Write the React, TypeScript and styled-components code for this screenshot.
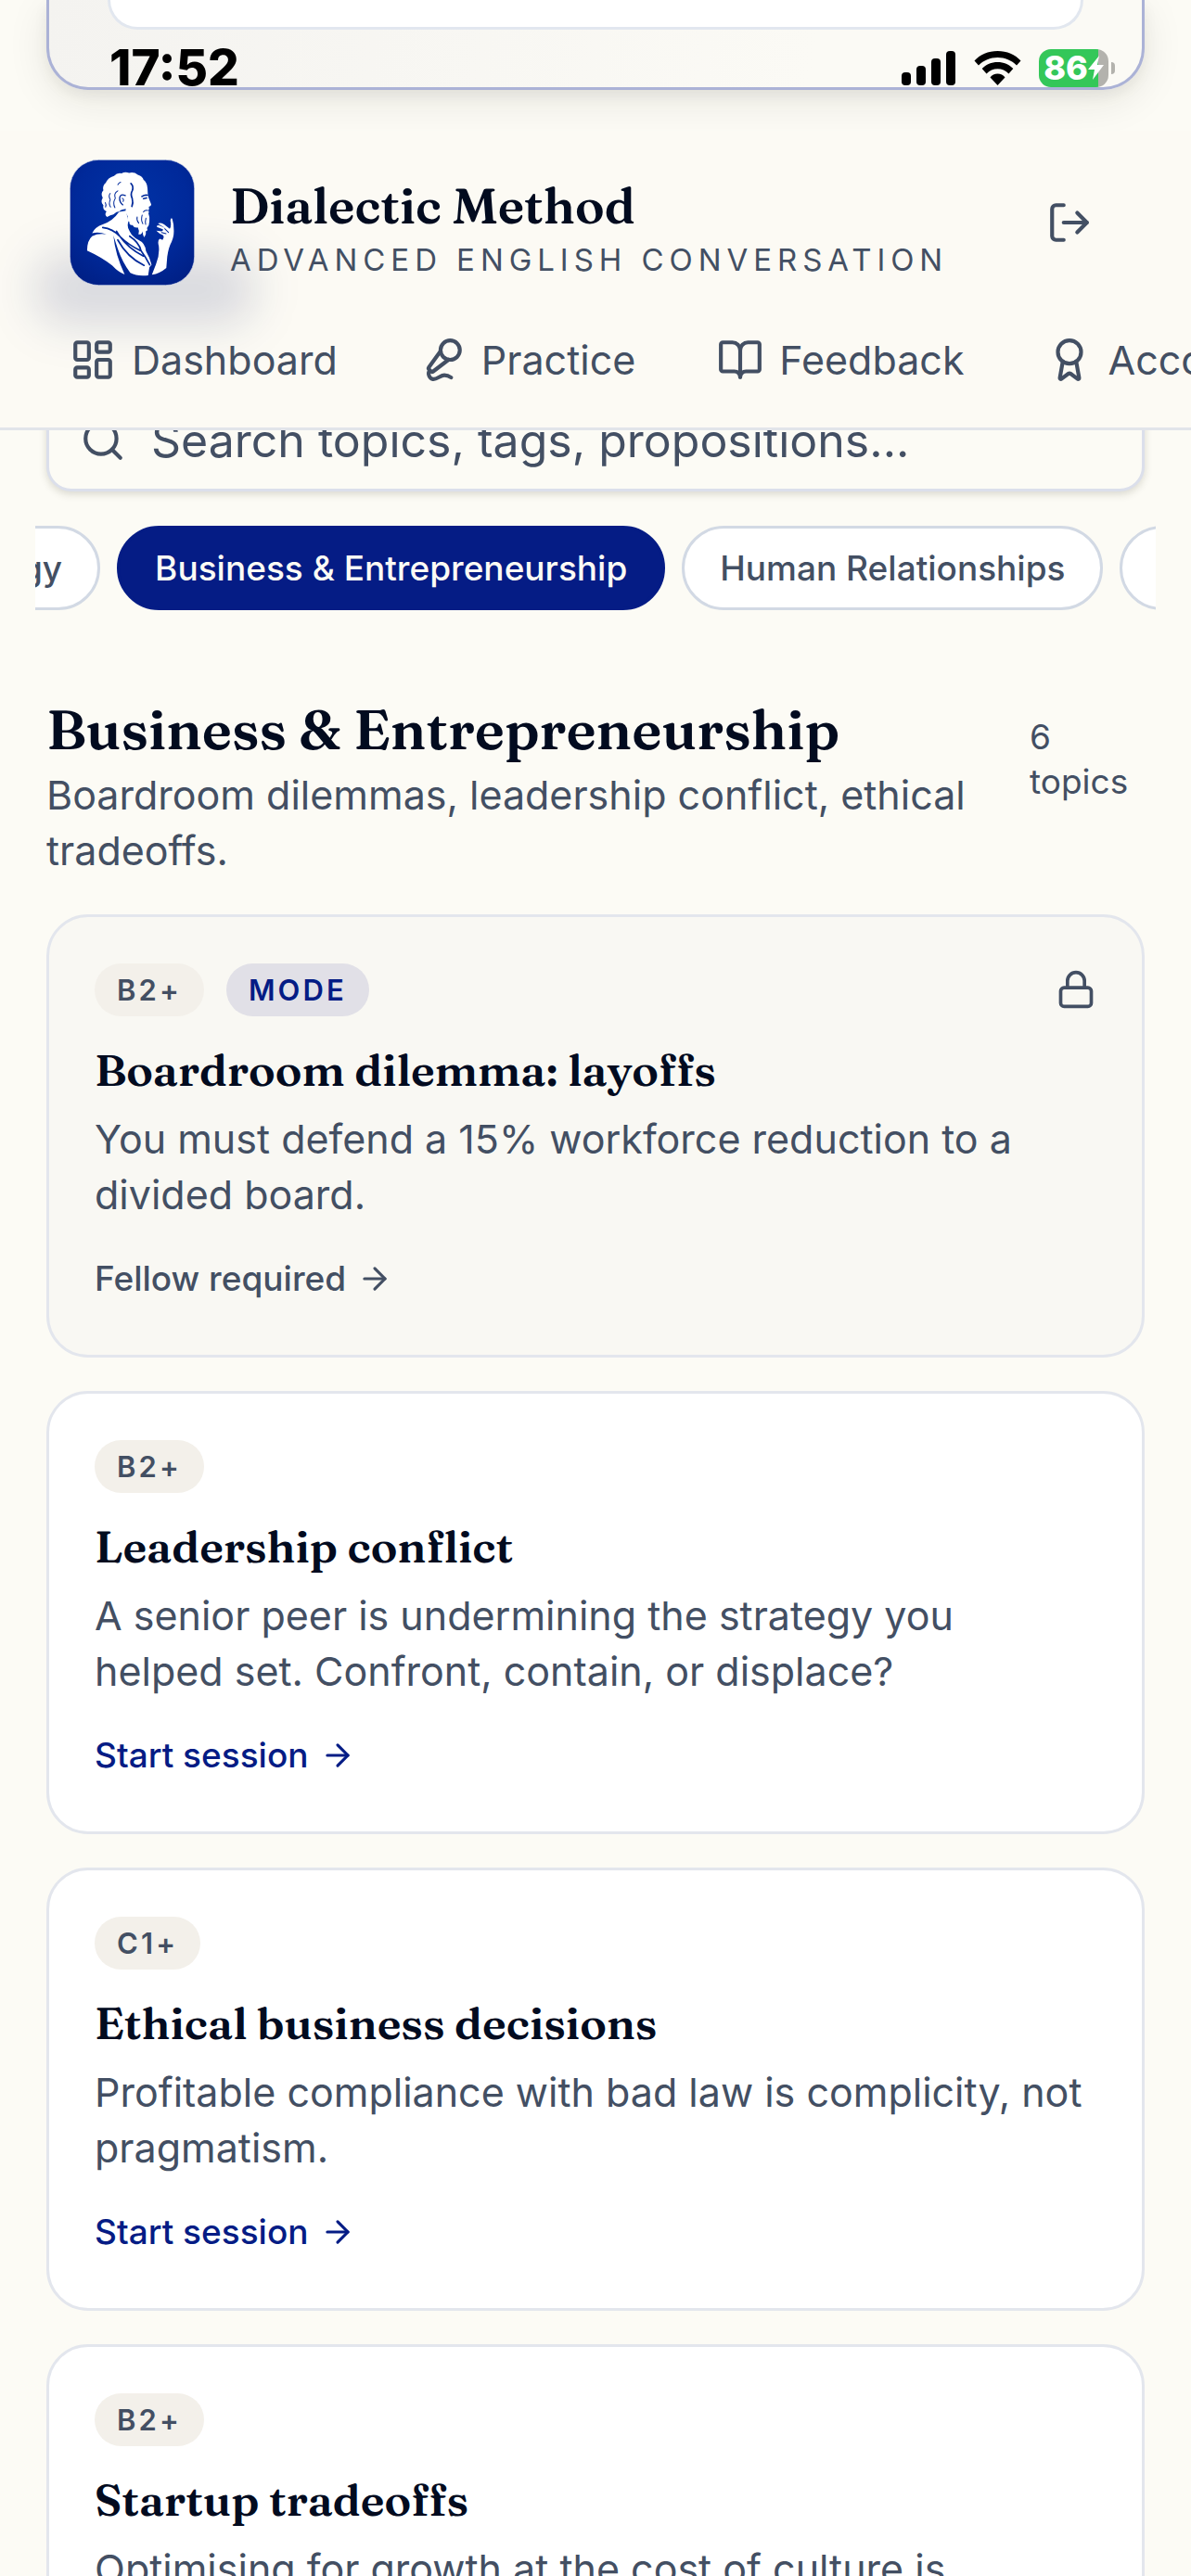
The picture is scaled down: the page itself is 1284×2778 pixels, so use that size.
import React, { useLayoutEffect, useRef, useState } from 'react';
import styled, { createGlobalStyle } from 'styled-components';
import {
  ArrowRight,
  Award,
  BookOpen,
  LayoutDashboard,
  Lock,
  LogOut,
  MicVocal,
  Search,
} from 'lucide-react';

const sans = `Inter, "Liberation Sans", sans-serif`;
const serif = `Fraunces, "Liberation Serif", serif`;

const color = {
  paper: '#fcfbf5',
  ink: '#020b1f',
  slate: '#434f63',
  navy: '#051c85',
  line: '#e3e6ed',
  chipLine: '#d2d9e4',
};

const GlobalStyle = createGlobalStyle`
  *, *::before, *::after { box-sizing: border-box; }
  html, body { margin: 0; height: 100%; overflow: hidden; background: ${color.paper}; }
  #root { height: 100%; }
  body { font-family: ${sans}; color: ${color.slate}; }
  h1, h2, h3, p { margin: 0; }
`;

const Page = styled.div`
  position: relative;
  height: 100%;
  overflow: hidden;
  background: ${color.paper};
`;

const StatusBar = styled.div`
  position: absolute;
  inset: 0 0 auto 0;
  z-index: 5;
  display: flex;
  justify-content: space-between;
  align-items: center;
  height: 146px;
  padding: 0 82px 0 118px;
`;

const Clock = styled.time`
  font-size: 53px;
  font-weight: 800;
  line-height: 60px;
  color: #000;
`;

const StatusIcons = styled.div`
  display: flex;
  align-items: center;
  gap: 19px;
`;

const Battery = styled.div`
  display: flex;
  align-items: center;
  gap: 3px;
`;

const BatteryBody = styled.div`
  display: flex;
  align-items: center;
  justify-content: center;
  width: 75px;
  height: 41px;
  border-radius: 13px;
  background: linear-gradient(90deg, #34c759 86%, #b3b2ad 86%);
  color: #fff;
  font-size: 36px;
  font-weight: 800;
  line-height: 41px;
`;

const BatteryCap = styled.div`
  width: 4px;
  height: 13px;
  border-radius: 0 6px 6px 0;
  background: #b3b2ad;
`;

const Header = styled.header`
  position: absolute;
  inset: 141px 0 auto 0;
  z-index: 4;
  overflow: hidden;
  padding: 31px 0 19px;
  border-bottom: 3px solid #e2e4ea;
  background: #fcfaf4;

  &::before {
    content: '';
    position: absolute;
    left: 36px;
    top: 132px;
    width: 240px;
    height: 78px;
    border-radius: 36px;
    background: rgba(5, 28, 100, 0.14);
    filter: blur(24px);
  }
`;

const BrandRow = styled.div`
  position: relative;
  display: flex;
  align-items: center;
  justify-content: space-between;
  padding: 0 106px 0 75px;
`;

const Brand = styled.a`
  display: flex;
  align-items: center;
  gap: 38px;
  color: inherit;
  text-decoration: none;
`;

const BrandText = styled.div`
  padding-top: 14px;
`;

const LogoTile = styled.svg`
  display: block;
  width: 135px;
  height: 136px;
`;

const BrandName = styled.h1`
  font-family: ${serif};
  font-size: 53px;
  font-weight: 600;
  line-height: 66px;
  color: ${color.ink};
`;

const Tagline = styled.p`
  font-size: 33px;
  line-height: 50px;
  letter-spacing: 0.18em;
  text-transform: uppercase;
`;

const IconButton = styled.button`
  display: flex;
  padding: 0;
  border: 0;
  background: none;
  color: inherit;
`;

const Nav = styled.nav`
  position: relative;
  display: flex;
  gap: 16px;
  margin-top: 26px;
  padding: 0 39px;
  overflow: hidden;
`;

const NavLink = styled.a`
  display: flex;
  flex: none;
  align-items: center;
  gap: 17px;
  padding: 24px 36px;
  color: inherit;
  font-size: 43px;
  line-height: 60px;
  text-decoration: none;
`;

const Main = styled.main`
  padding: 0 50px;
`;

const HeroCard = styled.section`
  height: 97px;
  padding: 0 63px;
  border: 3px solid #abb2d6;
  border-top: 0;
  border-radius: 0 0 45px 45px;
  background: linear-gradient(100deg, #f4f3f0, #fbfaf5 70%);
  box-shadow: 0 12px 45px rgba(30, 30, 20, 0.09), 0 6px 15px rgba(30, 30, 20, 0.06);
`;

const HeroInner = styled.div`
  height: 32px;
  border: 3px solid #e2e7ef;
  border-top: 0;
  border-radius: 0 0 45px 45px;
  background: #fff;
`;

const SearchField = styled.label`
  display: flex;
  align-items: center;
  gap: 27px;
  height: 111px;
  margin-top: 322px;
  padding: 0 33px;
  border: 3px solid #dbdfeb;
  border-radius: 27px;
  background: ${color.paper};
  box-shadow: 0 3px 9px rgba(60, 60, 40, 0.18);
`;

const SearchInput = styled.input`
  flex: 1;
  min-width: 0;
  padding: 0;
  border: 0;
  outline: 0;
  background: none;
  color: ${color.slate};
  font-family: ${sans};
  font-size: 50px;
  line-height: 72px;

  &::placeholder {
    color: ${color.slate};
    opacity: 1;
  }
`;

const ChipStrip = styled.div`
  position: relative;
  display: flex;
  gap: 18px;
  margin: 37px -12px 0;
  overflow-x: auto;
  scrollbar-width: none;
`;

const Chip = styled.button<{ $active: boolean }>`
  flex: none;
  padding: 18px 38px;
  border: 3px solid ${({ $active }) => ($active ? color.navy : color.chipLine)};
  border-radius: 48px;
  background: ${({ $active }) => ($active ? color.navy : '#fff')};
  color: ${({ $active }) => ($active ? color.paper : color.slate)};
  font-family: ${sans};
  font-size: 37px;
  font-weight: 500;
  line-height: 49px;
`;

const SectionHead = styled.div`
  display: flex;
  align-items: baseline;
  justify-content: space-between;
  gap: 48px;
  margin-top: 88px;
`;

const SectionTitle = styled.h2`
  margin-bottom: 1px;
  font-family: ${serif};
  font-size: 60px;
  font-weight: 600;
  line-height: 80px;
  color: ${color.ink};
`;

const BodyText = styled.p`
  padding-right: 6px;
  font-size: 43px;
  line-height: 60px;
`;

const TopicCount = styled.p`
  flex: none;
  width: 124px;
  font-size: 37px;
  line-height: 48px;
`;

const CardList = styled.div`
  display: grid;
  gap: 36px;
  margin-top: 39px;
`;

const Card = styled.article<{ $locked: boolean }>`
  padding: 48px 49px;
  border: 3px solid ${color.line};
  border-radius: 45px;
  background: ${({ $locked }) => ($locked ? '#f9f8f3' : '#fff')};
`;

const BadgeRow = styled.div`
  display: flex;
  align-items: center;
  justify-content: space-between;
  height: 60px;
`;

const Badges = styled.div`
  display: flex;
  gap: 24px;
`;

const Badge = styled.span<{ $tone: 'level' | 'mode' }>`
  padding: 6px 24px;
  border-radius: 30px;
  background: ${({ $tone }) => ($tone === 'mode' ? '#e1e0e7' : '#f3f0ea')};
  color: ${({ $tone }) => ($tone === 'mode' ? color.navy : color.slate)};
  font-size: 31px;
  font-weight: 600;
  line-height: 45px;
  letter-spacing: 0.1em;
`;

const CardTitle = styled.h3`
  margin: 24px 0 11px;
  font-family: ${serif};
  font-size: 48px;
  font-weight: 600;
  line-height: 66px;
  color: ${color.ink};
`;

const CardLink = styled.a<{ $locked: boolean }>`
  display: flex;
  align-items: center;
  gap: 12px;
  margin: 37px 0 10px;
  color: ${({ $locked }) => ($locked ? color.slate : color.navy)};
  font-size: 37px;
  font-weight: 500;
  line-height: 48px;
  text-decoration: none;
`;

function PhilosopherLogo() {
  return (
    <LogoTile viewBox="46 37 400 406" preserveAspectRatio="none" role="img" aria-label="Philosopher">
      <defs>
        <radialGradient id="tile" cx="0.5" cy="0.35" r="0.75">
          <stop offset="0" stopColor="#0033a6" />
          <stop offset="0.6" stopColor="#00299a" />
          <stop offset="1" stopColor="#001f84" />
        </radialGradient>
      </defs>
      <rect x="47" y="38" width="398" height="404" rx="92" fill="url(#tile)" stroke="#dfe2f0" strokeWidth="2" />
      <g fill="#fff">
        <path d="M188 90 Q198 79 212 82 Q222 76 236 80 Q252 76 264 86 Q280 92 282 102 Q294 112 295 130 L296 148 Q298 158 299 162 L307 182 Q307 188 299 189 Q302 196 298 201 Q301 206 298 211 Q303 222 301 236 Q301 250 293 258 Q298 266 289 268 Q292 278 284 287 Q279 281 280 268 Q276 280 266 278 Q270 266 264 256 Q252 258 247 248 Q236 250 237 238 Q227 234 232 220 Q222 206 226 196 Q210 198 205 204 Q196 204 186 214 Q176 216 166 222 Q156 214 164 204 Q150 198 154 184 Q144 174 152 160 Q144 146 154 136 Q150 122 162 112 Q168 96 188 90 Z" />
        <path d="M204 206 L226 202 L234 236 Q228 254 238 268 Q246 286 266 296 Q288 306 290 332 Q302 352 308 376 L301 384 L297 410 Q262 414 240 402 Q214 366 200 324 L186 282 Q192 344 222 407 Q202 400 182 378 Q150 352 102 330 Q102 298 118 284 Q138 274 164 278 Q140 268 118 274 Q128 254 152 246 Q184 236 204 206 Z" />
        <path d="M309 408 L322 374 Q334 346 331 316 Q326 298 334 292 L343 296 Q350 286 344 280 Q332 276 323 266 L340 268 Q346 266 344 262 L325 254 Q324 246 334 250 L352 258 L328 243 Q336 239 348 246 L366 260 Q372 250 368 234 Q370 222 374 228 Q379 244 379 264 Q380 284 372 302 Q362 320 358 350 L355 386 Q334 404 309 408 Z" />
      </g>
      <g fill="none" stroke="#00299a" strokeWidth="3" strokeLinecap="round" strokeLinejoin="round">
        <path d="M242 114 Q252 124 246 138 Q240 148 246 162 Q250 176 245 188" strokeWidth="5" />
        <path d="M224 153 Q208 146 206 160 Q205 174 216 183" strokeWidth="4" />
        <path d="M214 162 Q221 164 217 172" />
        <path d="M200 118 Q204 111 209 110 M176 146 Q169 154 176 166 Q170 180 177 190" />
        <path d="M200 138 Q186 146 192 162 Q183 178 191 192 M160 176 Q164 182 161 190" />
        <path d="M277 156 Q286 150 295 152 M282 163 L292 161" strokeWidth="5" />
        <path d="M282 206 Q286 199 296 201 M278 216 Q273 232 280 244 M262 222 Q259 232 267 242 M290 226 Q287 236 289 246" />
        <path d="M152 256 Q184 260 206 284 Q234 312 272 330 M196 268 Q226 320 282 348 M200 296 Q230 352 284 378 M238 284 Q268 304 274 330 Q290 352 302 376" strokeWidth="5" />
        <path d="M340 272 L354 276 M350 260 L362 272" />
      </g>
    </LogoTile>
  );
}

function SignalIcon() {
  return (
    <svg width="59" height="37" viewBox="0 0 59 37" aria-hidden="true">
      <rect x="0" y="23" width="10" height="14" rx="4" />
      <rect x="16" y="16" width="10" height="21" rx="4" />
      <rect x="32" y="8" width="10" height="29" rx="4" />
      <rect x="48" y="0" width="10" height="37" rx="4" />
    </svg>
  );
}

function WifiIcon() {
  return (
    <svg width="51" height="37" viewBox="0 0 51 37" aria-hidden="true">
      <path d="M25.500 0 C35.500 0 44.500 4 50.500 10.500 L46 15.500 C40.500 10 33.500 7 25.500 7 C17.500 7 10.500 10 5 15.500 L.5 10.500 C6.500 4 15.500 0 25.500 0 Z" />
      <path d="M25.500 12 C32 12 38 14.500 42.300 19 L37.500 24.500 C34.300 21.200 30 19.300 25.500 19.300 C21 19.300 16.700 21.200 13.500 24.500 L8.700 19 C13 14.500 19 12 25.500 12 Z" />
      <path d="M25.500 24.500 C28.800 24.500 31.700 26 33.500 28.500 L25.500 37 L17.500 28.500 C19.300 26 22.200 24.500 25.500 24.500 Z" />
    </svg>
  );
}

function BoltIcon() {
  return (
    <svg width="17" height="28" viewBox="0 0 17 28" fill="#fff" aria-hidden="true">
      <path d="M12 1 L0 16 H7 L5 27 L17 11 H10 Z" />
    </svg>
  );
}

const navItems = [
  { label: 'Dashboard', Icon: LayoutDashboard },
  { label: 'Practice', Icon: MicVocal },
  { label: 'Feedback', Icon: BookOpen },
  { label: 'Account', Icon: Award },
];

const categories = ['Technology', 'Business & Entrepreneurship', 'Human Relationships', 'Philosophy'];

const topics = [
  {
    level: 'B2+',
    locked: true,
    title: 'Boardroom dilemma: layoffs',
    text: 'You must defend a 15% workforce reduction to a divided board.',
  },
  {
    level: 'B2+',
    locked: false,
    title: 'Leadership conflict',
    text: 'A senior peer is undermining the strategy you helped set. Confront, contain, or displace?',
  },
  {
    level: 'C1+',
    locked: false,
    title: 'Ethical business decisions',
    text: 'Profitable compliance with bad law is complicity, not pragmatism.',
  },
  {
    level: 'B2+',
    locked: false,
    title: 'Startup tradeoffs',
    text: 'Optimising for growth at the cost of culture is',
  },
];

export default function App() {
  const [active, setActive] = useState('Business & Entrepreneurship');
  const stripRef = useRef<HTMLDivElement>(null);
  const activeRef = useRef<HTMLButtonElement>(null);

  useLayoutEffect(() => {
    if (stripRef.current && activeRef.current) {
      stripRef.current.scrollLeft = activeRef.current.offsetLeft - 88;
    }
  }, [active]);

  return (
    <Page>
      <GlobalStyle />
      <StatusBar>
        <Clock>17:52</Clock>
        <StatusIcons>
          <SignalIcon />
          <WifiIcon />
          <Battery>
            <BatteryBody>
              86
              <BoltIcon />
            </BatteryBody>
            <BatteryCap />
          </Battery>
        </StatusIcons>
      </StatusBar>

      <Header>
        <BrandRow>
          <Brand href="#home">
            <PhilosopherLogo />
            <BrandText>
              <BrandName>Dialectic Method</BrandName>
              <Tagline>Advanced English Conversation</Tagline>
            </BrandText>
          </Brand>
          <IconButton type="button" aria-label="Sign out">
            <LogOut size={50} />
          </IconButton>
        </BrandRow>
        <Nav aria-label="Primary">
          {navItems.map(({ label, Icon }) => (
            <NavLink key={label} href={`#${label.toLowerCase()}`}>
              <Icon size={50} aria-hidden="true" />
              {label}
            </NavLink>
          ))}
        </Nav>
      </Header>

      <Main>
        <HeroCard>
          <HeroInner />
        </HeroCard>

        <SearchField>
          <Search size={50} aria-hidden="true" />
          <SearchInput type="text" aria-label="Search topics" placeholder="Search topics, tags, propositions..." />
        </SearchField>

        <ChipStrip ref={stripRef}>
          {categories.map((name) => (
            <Chip
              key={name}
              type="button"
              ref={name === active ? activeRef : undefined}
              $active={name === active}
              onClick={() => setActive(name)}
            >
              {name}
            </Chip>
          ))}
        </ChipStrip>

        <SectionHead>
          <div>
            <SectionTitle>Business &amp; Entrepreneurship</SectionTitle>
            <BodyText>Boardroom dilemmas, leadership conflict, ethical tradeoffs.</BodyText>
          </div>
          <TopicCount>6 topics</TopicCount>
        </SectionHead>

        <CardList>
          {topics.map(({ level, locked, title, text }) => (
            <Card key={title} $locked={locked}>
              <BadgeRow>
                <Badges>
                  <Badge $tone="level">{level}</Badge>
                  {locked && <Badge $tone="mode">MODE</Badge>}
                </Badges>
                {locked && <Lock size={44} aria-label="Locked" />}
              </BadgeRow>
              <CardTitle>{title}</CardTitle>
              <BodyText>{text}</BodyText>
              <CardLink href="#session" $locked={locked}>
                {locked ? 'Fellow required' : 'Start session'}
                <ArrowRight size={38} aria-hidden="true" />
              </CardLink>
            </Card>
          ))}
        </CardList>
      </Main>
    </Page>
  );
}
